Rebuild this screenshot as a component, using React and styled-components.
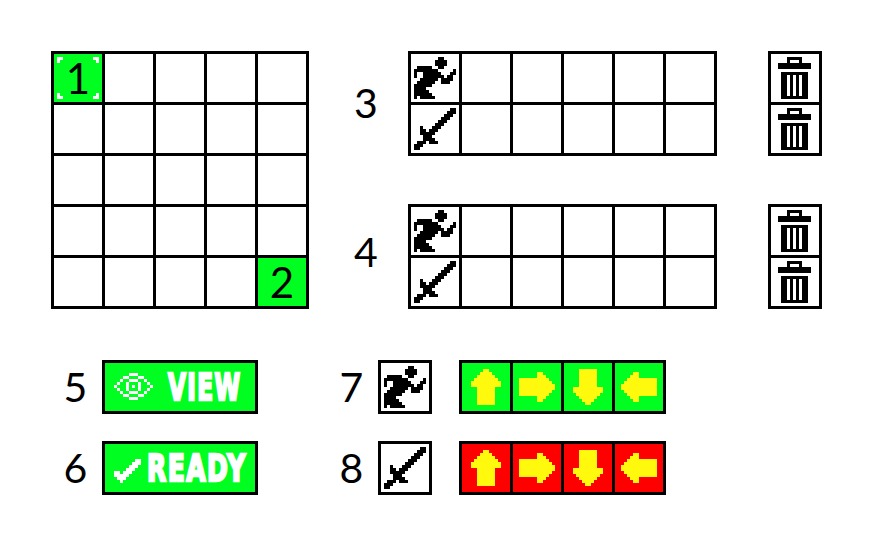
import React from "react";
import styled, { createGlobalStyle } from "styled-components";

const GREEN = "#00ff21";
const RED = "#ff0000";
const YELLOW = "#fff90d";

const GlobalStyle = createGlobalStyle`
  body { margin: 0; background: #fff; }
`;

const Page = styled.main`
  box-sizing: border-box;
  width: 873px;
  height: 546px;
  padding: 51px 51px 0;
  background: #fff;
  font-family: Lato, "Open Sans", sans-serif;
`;

const Row = styled.div`
  display: flex;
  align-items: flex-start;
`;

const Queues = styled.div`
  display: flex;
  flex-direction: column;
  gap: 48px;
  margin-left: 28px;
`;

const Tiles = styled.div`
  display: grid;
  grid-template-columns: repeat(${(p) => p.$cols}, 48px);
  grid-auto-rows: 48px;
  gap: 3px;
  padding: 3px;
  background: #000;
`;

const Tile = styled.div`
  display: flex;
  align-items: center;
  justify-content: center;
  position: relative;
  background: ${(p) => p.$fill || "#fff"};
`;

const Label = styled.span`
  display: block;
  width: ${(p) => p.$width}px;
  height: 54px;
  padding-top: ${(p) => p.$drop || 0}px;
  font-size: 41px;
  line-height: 54px;
  text-align: center;
  color: #000;
`;

const QueueLabel = styled(Label)`
  margin-right: 13px;
`;

const TileNumber = styled.span`
  position: relative;
  font-size: 42px;
  line-height: 48px;
`;

const Bins = styled.div`
  margin-left: 51px;
`;

const BinTile = styled(Tile)`
  align-items: flex-start;
  justify-content: flex-start;
  padding: 3px 0 0 7px;
`;

const Controls = styled.div`
  display: grid;
  grid-template-columns: 51px 156px 120px 81px 207px;
  row-gap: 27px;
  justify-items: start;
  margin-top: 51px;
`;

const Button = styled.button`
  box-sizing: border-box;
  display: flex;
  align-items: flex-start;
  width: 156px;
  height: 54px;
  padding: 0 0 0 9px;
  border: 3px solid #000;
  background: ${GREEN};
  color: #fff;
`;

const ButtonIcon = styled.span`
  display: flex;
  flex: none;
  width: ${(p) => p.$width}px;
  padding-top: ${(p) => p.$top}px;
`;

const ButtonText = styled.span`
  display: block;
  flex: none;
  font: bold 38px/48px "DejaVu Sans Condensed", "DejaVu Sans", sans-serif;
  letter-spacing: ${(p) => p.$spacing}px;
  -webkit-text-stroke: 2.5px #fff;
  transform: scaleX(${(p) => p.$squeeze});
  transform-origin: 0 0;
`;

const Pixels = styled.svg`
  display: block;
  flex: none;
`;

const Corners = styled(Pixels)`
  position: absolute;
  inset: 0;
`;

const UP = [
  "", "",
  ".......##", "......####", ".....######", "....########",
  "...##########", "...##########",
  ".....######", ".....######", ".....######", ".....######", ".....######", ".....######",
  "", "",
].map((r) => r.padEnd(16, "."));
const transpose = (a) => a.map((_, i) => a.map((r) => r[i]).join(""));
const DOWN = [...UP].reverse();
const LEFT = transpose(UP);
const RIGHT = LEFT.map((r) => [...r].reverse().join(""));

const RUNNER = [
  "................",
  ".........##.....",
  "........####....",
  "........####....",
  "..#####..##.....",
  ".########.....#.",
  ".#..######...##.",
  ".#..#######.##..",
  "...######.####..",
  "..######..###...",
  ".######.........",
  ".####...........",
  ".#####..........",
  ".######.........",
  ".#.#####........",
  "................",
];

const SWORD = [
  "................",
  ".............##.",
  "............###.",
  "...........###..",
  "..........###...",
  ".........###....",
  "........###.....",
  "...#...###......",
  "...##.###.......",
  "...#####........",
  "....###.........",
  "....####........",
  "..###.###.......",
  ".###............",
  ".##.............",
  "................",
];

const BIN = [
  "...#####...",
  "...#...#...",
  "###########",
  "###########",
  "...........",
  ".#########.",
  ".##.#.#.##.",
  ".##.#.#.##.",
  ".##.#.#.##.",
  ".##.#.#.##.",
  ".##.#.#.##.",
  ".##.#.#.##.",
  ".##.#.#.##.",
  ".#########.",
];

const EYE = [
  ".....###.....",
  "...##...##...",
  "..#..###..#..",
  ".#..#...#..#.",
  "#...#.#.#...#",
  ".#..#...#..#.",
  "..#..###..#..",
  "...##...##...",
  ".....###.....",
];

const CHECK = [
  ".......##",
  "......###",
  ".....###.",
  "....###..",
  "##.###...",
  "#####....",
  ".###.....",
  "..#......",
];

const CORNERS = [
  "................",
  ".##..........##.",
  ".#............#.",
  ...Array(10).fill("................"),
  ".#............#.",
  ".##..........##.",
  "................",
];

function Sprite({ art, color = "#000", as: Frame = Pixels }) {
  const w = art[0].length;
  const h = art.length;
  let d = "";
  art.forEach((row, y) => {
    for (const m of row.matchAll(/#+/g)) {
      d += `M${m.index} ${y}h${m[0].length}v1h-${m[0].length}z`;
    }
  });
  return (
    <Frame width={w * 3} height={h * 3} viewBox={`0 0 ${w} ${h}`} shapeRendering="crispEdges" aria-hidden="true">
      <path d={d} fill={color} />
    </Frame>
  );
}

function Board() {
  return (
    <Tiles $cols={5}>
      {Array.from({ length: 25 }, (_, i) => (
        <Tile key={i} $fill={i === 0 || i === 24 ? GREEN : undefined}>
          {i === 0 && <Sprite art={CORNERS} color="#fff" as={Corners} />}
          {i === 0 && <TileNumber>1</TileNumber>}
          {i === 24 && <TileNumber>2</TileNumber>}
        </Tile>
      ))}
    </Tiles>
  );
}

function Queue({ number, drop }) {
  return (
    <Row>
      <QueueLabel $width={58} $drop={drop}>{number}</QueueLabel>
      <Tiles $cols={6}>
        {Array.from({ length: 12 }, (_, i) => (
          <Tile key={i}>
            {i === 0 && <Sprite art={RUNNER} />}
            {i === 6 && <Sprite art={SWORD} />}
          </Tile>
        ))}
      </Tiles>
      <Bins>
        <Tiles $cols={1}>
          <BinTile><Sprite art={BIN} /></BinTile>
          <BinTile><Sprite art={BIN} /></BinTile>
        </Tiles>
      </Bins>
    </Row>
  );
}

function Arrows({ fill }) {
  return (
    <Tiles $cols={4}>
      {[UP, RIGHT, DOWN, LEFT].map((art, i) => (
        <Tile key={i} $fill={fill}><Sprite art={art} color={YELLOW} /></Tile>
      ))}
    </Tiles>
  );
}

export default function App() {
  return (
    <Page>
      <GlobalStyle />
      <Row>
        <Board />
        <Queues>
          <Queue number="3" drop={25} />
          <Queue number="4" drop={21} />
        </Queues>
      </Row>
      <Controls>
        <Label $width={49}>5</Label>
        <Button>
          <ButtonIcon $width={54} $top={10}><Sprite art={EYE} color="#fff" /></ButtonIcon>
          <ButtonText $squeeze={0.68} $spacing={2}>VIEW</ButtonText>
        </Button>
        <Label $width={187}>7</Label>
        <Tiles $cols={1}><Tile><Sprite art={RUNNER} /></Tile></Tiles>
        <Arrows fill={GREEN} />
        <Label $width={49}>6</Label>
        <Button>
          <ButtonIcon $width={33} $top={15}><Sprite art={CHECK} color="#fff" /></ButtonIcon>
          <ButtonText $squeeze={0.73} $spacing={2}>READY</ButtonText>
        </Button>
        <Label $width={187}>8</Label>
        <Tiles $cols={1}><Tile><Sprite art={SWORD} /></Tile></Tiles>
        <Arrows fill={RED} />
      </Controls>
    </Page>
  );
}
